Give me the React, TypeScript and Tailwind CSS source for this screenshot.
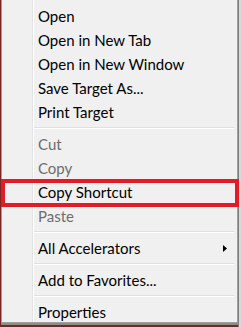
import React from 'react';

type Item = { label: string; disabled?: boolean; submenu?: boolean } | 'sep';

const items: Item[] = [
  { label: 'Open' },
  { label: 'Open in New Tab' },
  { label: 'Open in New Window' },
  { label: 'Save Target As...' },
  { label: 'Print Target' },
  'sep',
  { label: 'Cut', disabled: true },
  { label: 'Copy', disabled: true },
  { label: 'Copy Shortcut' },
  { label: 'Paste', disabled: true },
  'sep',
  { label: 'All Accelerators', submenu: true },
  'sep',
  { label: 'Add to Favorites...' },
  'sep',
  { label: 'Properties' },
];

export default function App() {
  return (
    <div
      className="relative w-[241px] h-[327px] overflow-hidden bg-[#9a9793] flex"
      style={{ fontFamily: 'Lato, "Noto Sans", sans-serif' }}
    >
      <div className="w-[1px] h-full bg-[#7a2424]" />
      <div className="flex flex-col h-full">
        <div className="relative w-[237px] h-[323px] bg-[#f0f0f0] border-l border-r border-b border-[#a0a0a0] pt-[4px]">
          {/* gutter line */}
          <div className="absolute left-[30px] top-0 bottom-0 w-[1px] bg-[#e2e3e3]" />
          <div className="absolute left-[31px] top-0 bottom-0 w-[1px] bg-white" />
          <ul>
            {items.map((item, index) =>
              item === 'sep' ? (
                <li key={index} className="h-[8px] flex flex-col justify-center pl-[32px] pr-[3px]">
                  <div className="h-[1px] bg-[#e0e0e0]" />
                  <div className="h-[1px] bg-white" />
                </li>
              ) : (
                <li
                  key={index}
                  className={`h-[24px] flex items-center justify-between pl-[36px] pr-[10px] text-[15px] leading-none ${
                    item.disabled ? 'text-[#6d6d6d]' : 'text-black'
                  }`}
                >
                  <span>{item.label}</span>
                  {item.submenu && (
                    <svg width="4" height="7" viewBox="0 0 4 7">
                      <path d="M0 0 L4 3.5 L0 7 Z" fill="#000" />
                    </svg>
                  )}
                </li>
              )
            )}
          </ul>
        </div>
        <div className="flex-1 bg-[#8f8c88] border-b-2 border-[#6e2a26]" />
      </div>
      <div className="flex-1 h-full bg-[#d9d9d9] border-l border-[#7d7d7d]" />
      {/* highlight box */}
      <div className="absolute left-[1px] top-[179px] w-[238px] h-[28px] border-4 border-[#e31b23]" />
    </div>
  );
}
